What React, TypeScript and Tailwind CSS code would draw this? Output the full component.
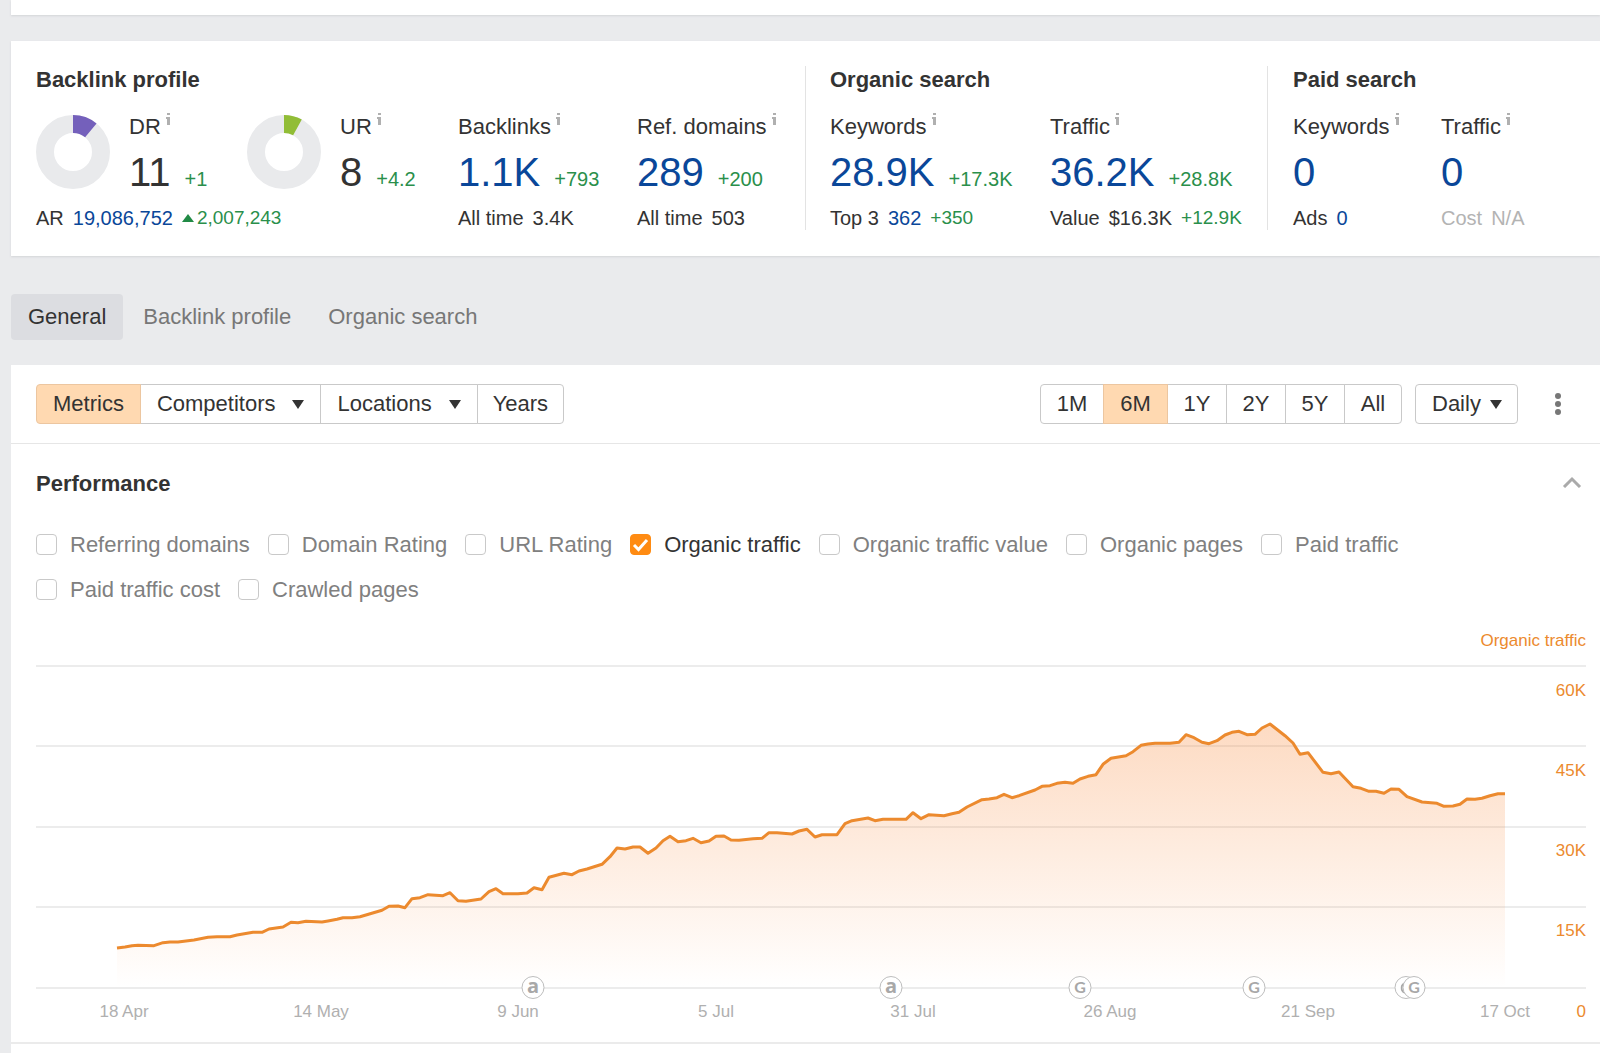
import { useState, type ReactNode } from "react";
import clsx from "clsx";

const METRICS = [
    "Referring domains",
    "Domain Rating",
    "URL Rating",
    "Organic traffic",
    "Organic traffic value",
    "Organic pages",
    "Paid traffic",
    "Paid traffic cost",
    "Crawled pages",
];

const RANGES = [
    { label: "1M", width: "w-16" },
    { label: "6M", width: "w-[65px]" },
    { label: "1Y", width: "w-[60px]" },
    { label: "2Y", width: "w-[60px]" },
    { label: "5Y", width: "w-[60px]" },
    { label: "All", width: "w-[58px]" },
];

const TABS = ["General", "Backlink profile", "Organic search"];

// Chart coordinates: x 36..1586, baseline at y 988, one grid step is 15K
const CHART_LEFT = 36;
const CHART_WIDTH = 1550;
const GRID = [666, 746, 827, 907, 988];

const TRAFFIC: [number, number][] = [
    [117, 948], [125, 947], [132, 945.7], [138, 945.3], [154, 945.7], [163, 942.7], [170, 942], [178, 942], [194, 940],
    [208, 937.3], [217, 936.7], [230, 936.7], [237, 935], [253, 932.3], [262, 932.3], [269, 929], [283, 927],
    [291, 922.3], [298, 922.7], [306, 921.3], [322, 922], [328, 921], [337, 919.3], [343, 917.7], [352, 917.7],
    [360, 916.7], [382, 910.3], [389, 906.3], [398, 906], [405, 907.7], [412, 898.7], [420, 897.7], [428, 894.7],
    [443, 895.7], [450, 892.7], [458, 900.7], [466, 901.3], [481, 899], [489, 891.7], [496, 888.7], [503, 893.7],
    [518, 893.7], [527, 893], [534, 887.7], [542, 889.7], [549, 877.3], [564, 873.3], [572, 874.7], [579, 871],
    [587, 869], [602, 864.3], [610, 856.7], [617, 848], [625, 849], [633, 847], [640, 847], [648, 853.3], [656, 848],
    [663, 840.7], [670, 836.3], [678, 841.7], [686, 840.7], [693, 838.3], [701, 842.7], [709, 841], [716, 836.3],
    [724, 836], [731, 840], [739, 840.3], [753, 838.7], [762, 838.3], [769, 832.7], [777, 832.7], [792, 834],
    [799, 831], [807, 829.3], [815, 837], [822, 834.7], [837, 834.7], [845, 823.7], [852, 820.7], [868, 818],
    [875, 820.7], [883, 819.3], [906, 819.3], [913, 812.7], [921, 818.7], [929, 814.7], [944, 815.7], [952, 813.7],
    [959, 812.3], [967, 807], [982, 799.7], [989, 799], [997, 797.7], [1004, 794.3], [1012, 797.7], [1019, 795.7],
    [1035, 790], [1042, 786.3], [1050, 785.7], [1057, 783.3], [1065, 782.3], [1073, 783.3], [1080, 779], [1088, 776.3],
    [1096, 774.7], [1103, 764.3], [1111, 758.3], [1126, 755.7], [1133, 751.7], [1141, 745.3], [1148, 744],
    [1155, 743.3], [1170, 743.3], [1179, 742.3], [1186, 734.7], [1194, 737.7], [1202, 742.3], [1209, 743.7],
    [1217, 740.7], [1225, 735], [1232, 732.3], [1239, 731.3], [1247, 734.7], [1255, 734.3], [1262, 728], [1270, 724],
    [1278, 730.3], [1285, 735.7], [1293, 743], [1300, 754.3], [1308, 752.7], [1323, 772.3], [1331, 773.7],
    [1339, 772], [1353, 786.7], [1361, 788.3], [1369, 791.3], [1376, 791.3], [1384, 793.3], [1391, 789], [1399, 789.3],
    [1407, 796.7], [1422, 802], [1437, 803.3], [1444, 806.3], [1453, 806], [1460, 804.3], [1467, 799], [1475, 799.3],
    [1482, 798.3], [1490, 795.7], [1498, 793.7], [1505, 793.7],
];

const DATES = [
    { label: "18 Apr", x: 124 },
    { label: "14 May", x: 321 },
    { label: "9 Jun", x: 518 },
    { label: "5 Jul", x: 716 },
    { label: "31 Jul", x: 913 },
    { label: "26 Aug", x: 1110 },
    { label: "21 Sep", x: 1308 },
    { label: "17 Oct", x: 1505 },
];

// An event without a mark is mostly covered by its neighbour, only an arc shows
const EVENTS = [
    { mark: "a", x: 533 },
    { mark: "a", x: 891 },
    { mark: "G", x: 1080 },
    { mark: "G", x: 1254 },
    { mark: null, x: 1406 },
    { mark: "G", x: 1414 },
];

const toPercent = (x: number) => `${((x - CHART_LEFT) / CHART_WIDTH) * 100}%`;

function InfoMark() {
    return (
        <svg className="ml-[5px] h-3 w-1 shrink-0" viewBox="0 0 4 12" fill="#b0b0b0" aria-hidden="true">
            <rect x="1" y="0" width="3" height="2" />
            <path d="M0 4h4v8H1V6H0z" />
        </svg>
    );
}

function Caret() {
    return (
        <svg className="h-2.5 w-3" viewBox="0 0 12 10" fill="#333" aria-hidden="true">
            <path d="M0 1h12L6 10z" />
        </svg>
    );
}

function Donut({ value, color }: { value: number; color: string }) {
    return (
        <svg className="mt-[3px] size-[74px] shrink-0 -rotate-90" viewBox="0 0 74 74" fill="none" aria-hidden="true">
            <circle cx="37" cy="37" r="28" stroke="#e9eaec" strokeWidth="18" />
            <circle
                cx="37"
                cy="37"
                r="28"
                stroke={color}
                strokeWidth="18"
                pathLength="100"
                strokeDasharray={`${value} 100`}
            />
        </svg>
    );
}

function Green({ children, small }: { children: ReactNode; small?: boolean }) {
    return <span className={clsx("leading-6 text-[#2a8f4b]", small ? "text-[19px]" : "text-xl")}>{children}</span>;
}

function BlueLink({ children }: { children: ReactNode }) {
    return <a href="#" className="text-[#0a4799]">{children}</a>;
}

interface MetricProps {
    label: string;
    value: string;
    delta?: string;
    link?: boolean;
}

function Metric({ label, value, delta, link = true }: MetricProps) {
    return (
        <div className="pt-px">
            <div className="flex text-[22px] leading-7">
                {label}
                <InfoMark />
            </div>
            <div className="mt-[11px] flex items-baseline gap-3.5 text-[40px] leading-10">
                {link ? <BlueLink>{value}</BlueLink> : <span>{value}</span>}
                {delta && <Green>{delta}</Green>}
            </div>
        </div>
    );
}

function Sub({ children, className }: { children: ReactNode; className?: string }) {
    return <div className={clsx("flex gap-[9px] whitespace-nowrap text-xl leading-6", className)}>{children}</div>;
}

function SectionTitle({ children }: { children: ReactNode }) {
    return <h2 className="mb-[18px] text-[22px] font-bold leading-7">{children}</h2>;
}

function Overview() {
    return (
        <section className="flex bg-white px-[25px] pb-[26px] pt-[25px] shadow-[0_1px_2px_#d4d5d8]">
            <div className="border-r border-[#e3e3e3]">
                <SectionTitle>Backlink profile</SectionTitle>
                <div className="grid grid-cols-[211px_211px_179px_168px] gap-y-3.5">
                    <div className="flex items-start gap-[19px]">
                        <Donut value={11} color="#7460bb" />
                        <Metric label="DR" value="11" delta="+1" link={false} />
                    </div>
                    <div className="flex items-start gap-[19px]">
                        <Donut value={8} color="#91bd36" />
                        <Metric label="UR" value="8" delta="+4.2" link={false} />
                    </div>
                    <Metric label="Backlinks" value="1.1K" delta="+793" />
                    <Metric label="Ref. domains" value="289" delta="+200" />
                    <Sub className="col-span-2">
                        <span>AR</span>
                        <BlueLink>19,086,752</BlueLink>
                        <span className="flex items-center gap-[3px]">
                            <svg className="h-2 w-3" viewBox="0 0 12 8" fill="#218a45" aria-hidden="true">
                                <path d="M6 0l6 8H0z" />
                            </svg>
                            <Green small>2,007,243</Green>
                        </span>
                    </Sub>
                    <Sub>
                        <span>All time</span>
                        <span>3.4K</span>
                    </Sub>
                    <Sub>
                        <span>All time</span>
                        <span>503</span>
                    </Sub>
                </div>
            </div>
            <div className="border-r border-[#e3e3e3] pl-6">
                <SectionTitle>Organic search</SectionTitle>
                <div className="grid grid-cols-[220px_217px] gap-y-3.5">
                    <Metric label="Keywords" value="28.9K" delta="+17.3K" />
                    <Metric label="Traffic" value="36.2K" delta="+28.8K" />
                    <Sub>
                        <span>Top 3</span>
                        <BlueLink>362</BlueLink>
                        <Green small>+350</Green>
                    </Sub>
                    <Sub>
                        <span>Value</span>
                        <span>$16.3K</span>
                        <Green small>+12.9K</Green>
                    </Sub>
                </div>
            </div>
            <div className="pl-[25px]">
                <SectionTitle>Paid search</SectionTitle>
                <div className="grid grid-cols-[148px_120px] gap-y-3.5">
                    <Metric label="Keywords" value="0" />
                    <Metric label="Traffic" value="0" />
                    <Sub>
                        <span>Ads</span>
                        <BlueLink>0</BlueLink>
                    </Sub>
                    <Sub className="text-[#b3b3b3]">
                        <span>Cost</span>
                        <span>N/A</span>
                    </Sub>
                </div>
            </div>
        </section>
    );
}

interface SegmentProps {
    children: ReactNode;
    active?: boolean;
    menu?: boolean;
    className?: string;
    onClick?: () => void;
}

function Segment({ children, active, menu, className = "px-4", onClick }: SegmentProps) {
    return (
        <button
            type="button"
            onClick={onClick}
            aria-pressed={menu ? undefined : !!active}
            aria-haspopup={menu ? "menu" : undefined}
            className={clsx(
                "-ml-px flex h-10 items-center justify-center gap-[17px] border first:ml-0 first:rounded-l last:rounded-r",
                active ? "z-10 border-[#ecc6a0] bg-[#ffd9b1]" : "border-[#c9c9c9] bg-white",
                className
            )}
        >
            {children}
            {menu && <Caret />}
        </button>
    );
}

function Toolbar() {
    const [range, setRange] = useState("6M");

    return (
        <div className="flex items-center border-b border-[#e6e6e6] py-[19px] pl-[25px] pr-[30px] text-[22px] leading-7">
            <div className="flex">
                <Segment active>Metrics</Segment>
                <Segment menu>Competitors</Segment>
                <Segment menu>Locations</Segment>
                <Segment className="px-[15px]">Years</Segment>
            </div>
            <div className="ml-auto flex">
                {RANGES.map((r) => (
                    <Segment
                        key={r.label}
                        active={r.label === range}
                        className={r.width}
                        onClick={() => setRange(r.label)}
                    >
                        {r.label}
                    </Segment>
                ))}
            </div>
            <div className="relative ml-[13px]">
                <select
                    aria-label="Interval"
                    defaultValue="Daily"
                    className="h-10 w-[103px] appearance-none rounded border border-[#c9c9c9] bg-white pl-4"
                >
                    <option>Daily</option>
                    <option>Weekly</option>
                    <option>Monthly</option>
                </select>
                <span className="pointer-events-none absolute inset-y-0 right-4 flex items-center">
                    <Caret />
                </span>
            </div>
            <button type="button" aria-label="More" className="ml-7 flex h-10 w-6 items-center justify-center">
                <svg className="h-[22px] w-2" viewBox="0 0 8 22" fill="#777" aria-hidden="true">
                    <circle cx="4" cy="3" r="3" />
                    <circle cx="4" cy="11" r="3" />
                    <circle cx="4" cy="19" r="3" />
                </svg>
            </button>
        </div>
    );
}

function MetricCheckbox({ label }: { label: string }) {
    const [checked, setChecked] = useState(label === "Organic traffic");

    return (
        <label className={clsx("flex items-center gap-[13px]", checked ? "text-[#333]" : "text-[#808080]")}>
            <span className="grid">
                <input
                    type="checkbox"
                    checked={checked}
                    onChange={(e) => setChecked(e.target.checked)}
                    className="col-start-1 row-start-1 size-[21px] appearance-none rounded border border-[#c9c9c9] bg-white checked:border-[#ff8b12] checked:bg-[#ff8b12]"
                />
                {checked && (
                    <svg
                        className="pointer-events-none col-start-1 row-start-1 size-[21px]"
                        viewBox="0 0 21 21"
                        fill="none"
                        stroke="#fff"
                        strokeWidth="3"
                        aria-hidden="true"
                    >
                        <path d="M4 11l4.5 4.5L17 6" />
                    </svg>
                )}
            </span>
            <span className="pt-0.5">{label}</span>
        </label>
    );
}

function TrafficChart() {
    const line = TRAFFIC.map(([x, y]) => `${x},${y}`).join(" ");

    return (
        <div className="mt-[27px] text-[17px] leading-5 text-[#ec8a2e]">
            <div className="text-right">Organic traffic</div>
            <div className="relative mt-3.5">
                <svg
                    className="block h-[324px] w-full"
                    viewBox="36 665 1550 324"
                    preserveAspectRatio="none"
                    role="img"
                    aria-label="Organic traffic, 18 Apr to 17 Oct"
                >
                    <defs>
                        <linearGradient id="traffic-fill" x1="0" y1="0" x2="0" y2="1">
                            <stop offset="0" stopColor="#f98a3c" stopOpacity="0.31" />
                            <stop offset="1" stopColor="#f98a3c" stopOpacity="0" />
                        </linearGradient>
                    </defs>
                    {GRID.map((y) => (
                        <line key={y} x1="36" x2="1586" y1={y} y2={y} stroke="#ececec" strokeWidth="2" />
                    ))}
                    <polygon points={`117,988 ${line} 1505,988`} fill="url(#traffic-fill)" />
                    <polyline
                        points={line}
                        fill="none"
                        stroke="#ec8a2e"
                        strokeWidth="3"
                        strokeLinejoin="round"
                        vectorEffect="non-scaling-stroke"
                    />
                </svg>
                <div className="absolute right-0 top-4 flex flex-col gap-[60px] text-right">
                    <span>60K</span>
                    <span>45K</span>
                    <span>30K</span>
                    <span>15K</span>
                </div>
                {EVENTS.map((e) => (
                    <span
                        key={e.x}
                        style={{ left: toPercent(e.x) }}
                        className={clsx(
                            "absolute -bottom-2.5 flex size-[23px] -translate-x-1/2 items-center justify-center rounded-full border border-[#bdbdbd] bg-white font-bold text-[#a8a8a8]",
                            e.mark === "a"
                                ? "pb-[3px] font-['Open_Sans',sans-serif] text-xl leading-5"
                                : "pb-0.5 font-[Lato,sans-serif] text-base leading-5"
                        )}
                    >
                        {e.mark ?? (
                            <svg
                                className="mt-0.5 size-3"
                                viewBox="0 0 12 12"
                                fill="none"
                                stroke="#a8a8a8"
                                strokeWidth="2"
                                aria-hidden="true"
                            >
                                <path d="M6 1a5 5 0 0 0 0 10" />
                            </svg>
                        )}
                    </span>
                ))}
            </div>
            <div className="relative mt-[13px] text-right">
                {DATES.map((d) => (
                    <span
                        key={d.label}
                        style={{ left: toPercent(d.x) }}
                        className="absolute -translate-x-1/2 whitespace-nowrap text-[#b0b0b0]"
                    >
                        {d.label}
                    </span>
                ))}
                <span>0</span>
            </div>
        </div>
    );
}

export default function App() {
    const [tab, setTab] = useState("General");

    return (
        <div className="flex min-h-screen flex-col bg-[#eaebed] pl-[11px] font-['Liberation_Sans',Arial,sans-serif] text-[#333]">
            <div className="mb-[26px] h-[15px] bg-white shadow-[0_1px_2px_#d4d5d8]" />
            <Overview />

            <nav className="mb-[25px] mt-[38px] flex gap-[3px] text-[22px] leading-7">
                {TABS.map((t) => (
                    <button
                        key={t}
                        type="button"
                        onClick={() => setTab(t)}
                        className={clsx(
                            "h-[46px] rounded px-[17px]",
                            t === tab ? "bg-[#dcdde1] text-[#333]" : "text-[#777]"
                        )}
                    >
                        {t}
                    </button>
                ))}
            </nav>

            <main className="flex-1 bg-white">
                <Toolbar />
                <div className="border-b-2 border-[#ebebeb] pb-5 pl-[25px] pr-3.5 pt-[26px]">
                    <div className="flex items-center justify-between">
                        <h2 className="text-[22px] font-bold leading-7">Performance</h2>
                        <button type="button" aria-label="Collapse" className="px-1 pb-1">
                            <svg className="h-3 w-5" viewBox="0 0 20 12" fill="none" stroke="#aaa" strokeWidth="3" aria-hidden="true">
                                <path d="M2 11l8-8 8 8" />
                            </svg>
                        </button>
                    </div>
                    <div className="mt-[31px] flex flex-wrap gap-x-[18px] gap-y-[15px] pr-24 text-[22px] leading-7">
                        {METRICS.map((m) => (
                            <MetricCheckbox key={m} label={m} />
                        ))}
                    </div>
                    <TrafficChart />
                </div>
            </main>
        </div>
    );
}
